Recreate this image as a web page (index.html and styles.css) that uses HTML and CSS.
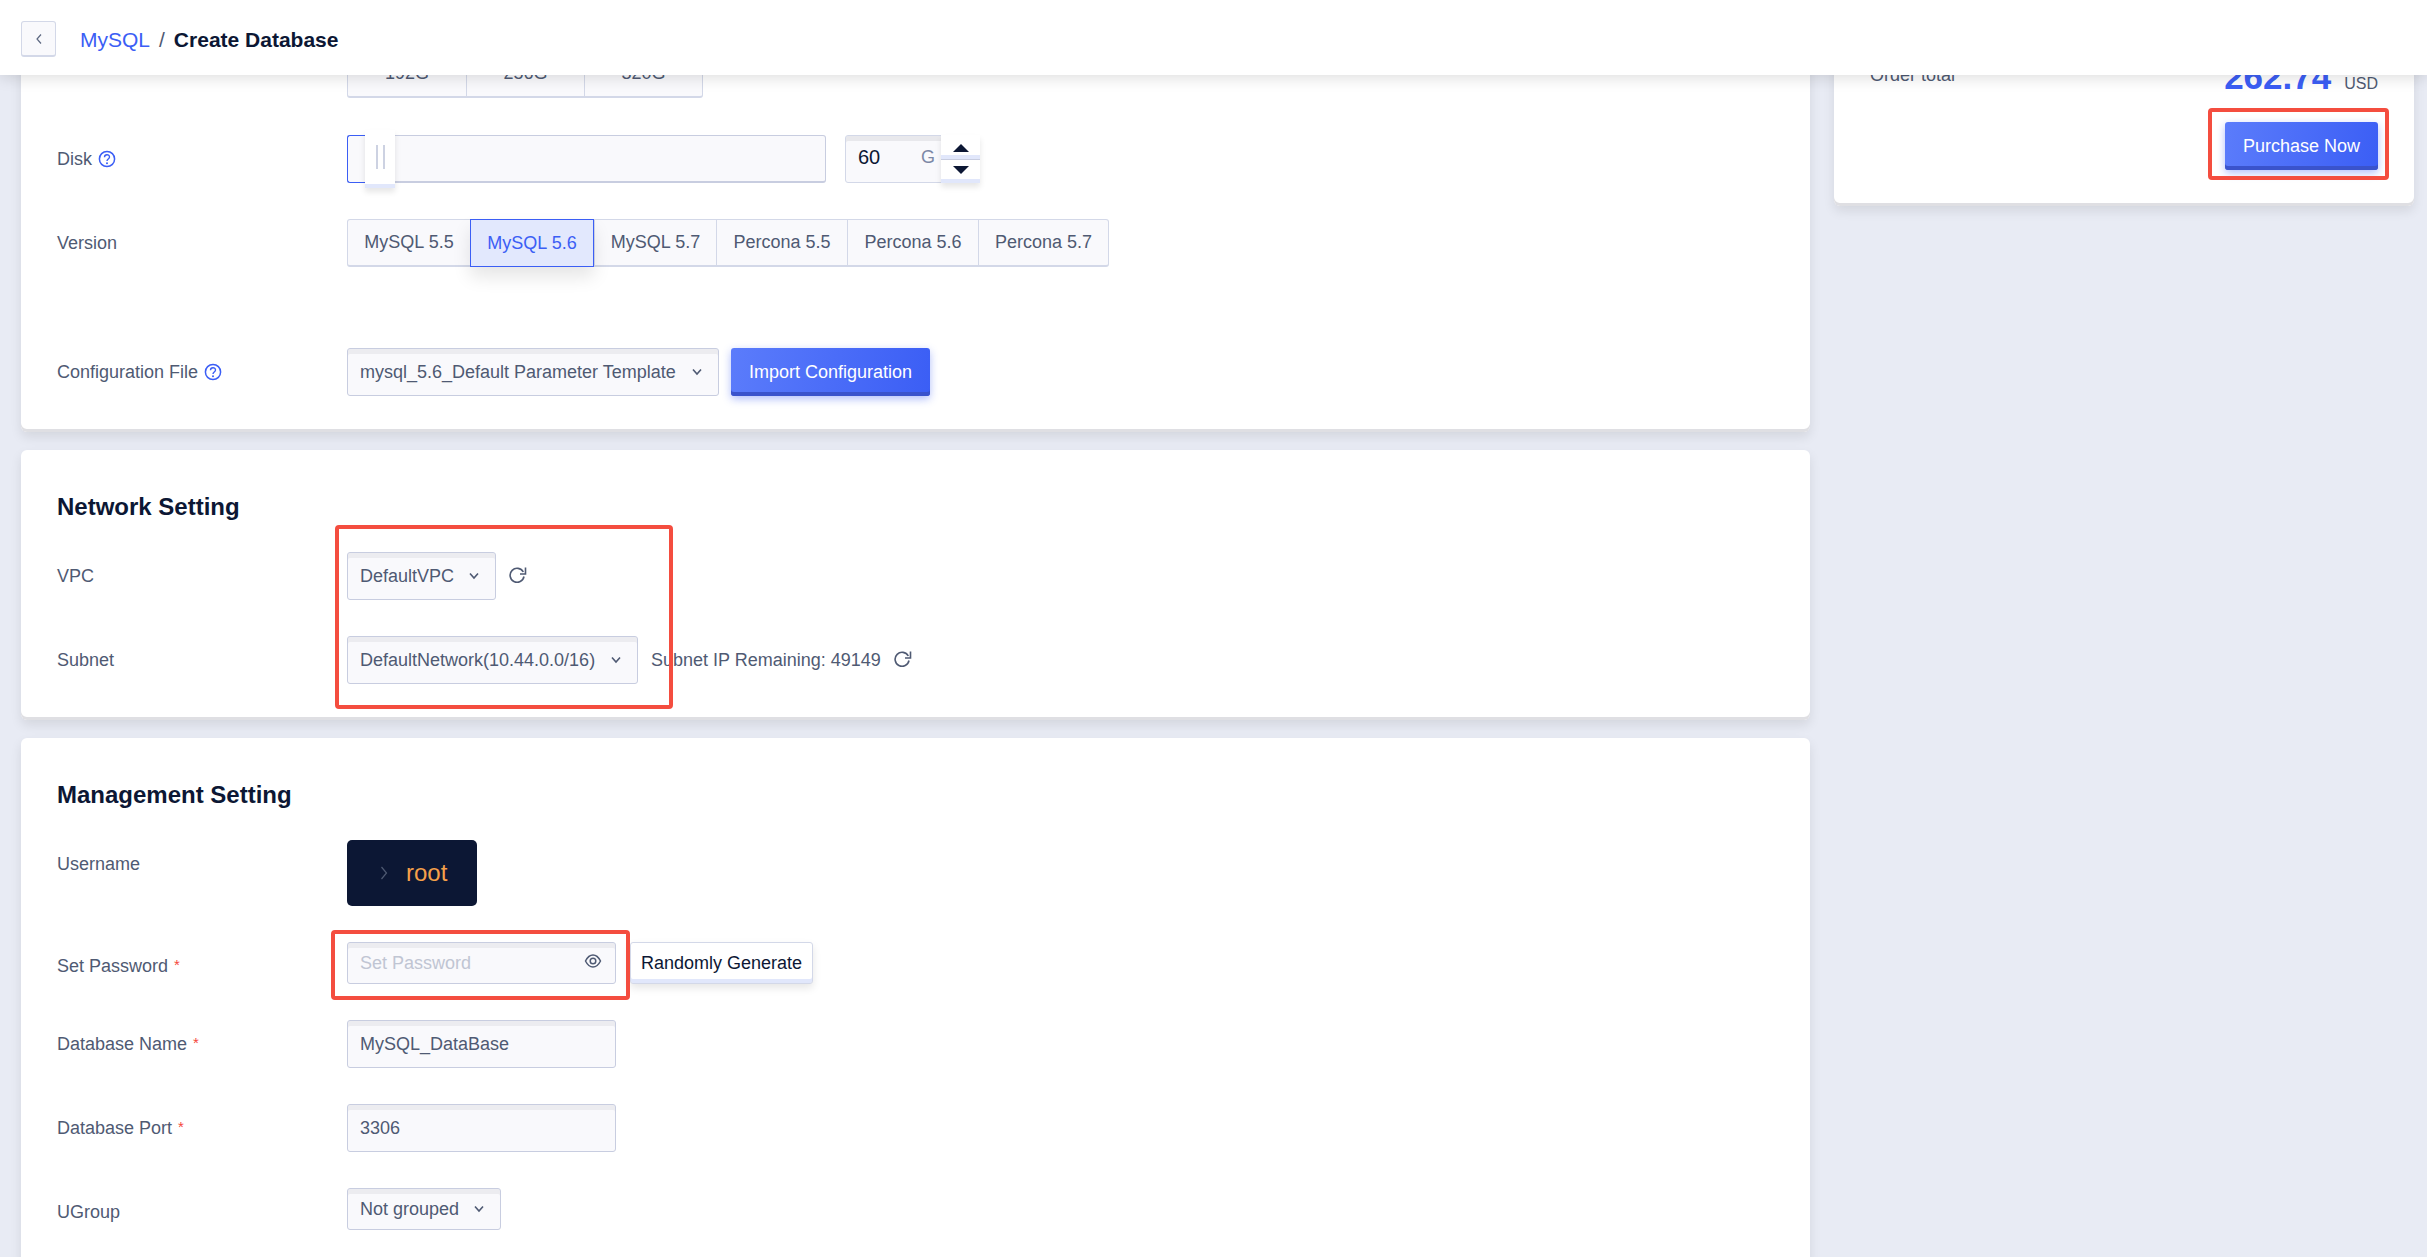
FILE: index.html
```html
<!DOCTYPE html>
<html lang="en">
<head>
    <meta charset="UTF-8">
    <title>Create Database</title>
    <link rel="stylesheet" href="styles.css">
</head>
<body>
    <header class="topbar">
        <button class="back-btn" type="button">
            <svg width="10" height="14" viewBox="0 0 10 14"><path d="M7 2.500 3 7l4 4.500" fill="none" stroke="#5c6780" stroke-width="1.2"/></svg>
        </button>
        <a class="crumb crumb-link">MySQL</a>
        <span class="crumb crumb-sep">/</span>
        <strong class="crumb crumb-current">Create Database</strong>
    </header>

    <main class="viewport">
        <div class="columns">
            <div class="form-col">
                <section class="card">
                    <div class="row">
                        <div class="label"></div>
                        <div class="seg-group memory-seg">
                            <span class="seg">192G</span>
                            <span class="seg">256G</span>
                            <span class="seg">320G</span>
                        </div>
                    </div>
                    <div class="row row-disk">
                        <div class="label">Disk
                            <svg class="help" width="18" height="18" viewBox="0 0 18 18"><circle cx="9" cy="9" r="7.600" fill="none" stroke="#3b5ef5" stroke-width="1.500"/><path d="M6.500 7.200c0-3.300 5-3.300 5-.2 0 2-2.500 2-2.500 4" fill="none" stroke="#3b5ef5" stroke-width="1.400"/><circle cx="9" cy="13.200" r="1" fill="#3b5ef5"/></svg>
                        </div>
                        <div class="slider">
                            <span class="slider-fill"></span>
                            <span class="slider-handle"><i></i><i></i></span>
                        </div>
                        <div class="stepper">
                            <span class="stepper-value">60</span>
                            <span class="stepper-unit">G</span>
                            <span class="stepper-btns">
                                <span class="step step-up"><svg width="16" height="8" viewBox="0 0 16 8"><path d="M8 0 16 8H0z" fill="#0c1734"/></svg></span>
                                <span class="step step-down"><svg width="16" height="8" viewBox="0 0 16 8"><path d="M8 8 16 0H0z" fill="#0c1734"/></svg></span>
                            </span>
                        </div>
                    </div>
                    <div class="row row-version">
                        <div class="label">Version</div>
                        <div class="seg-group version-seg">
                            <span class="seg">MySQL 5.5</span>
                            <span class="seg seg-active">MySQL 5.6</span>
                            <span class="seg">MySQL 5.7</span>
                            <span class="seg">Percona 5.5</span>
                            <span class="seg">Percona 5.6</span>
                            <span class="seg">Percona 5.7</span>
                        </div>
                    </div>
                    <div class="row">
                        <div class="label">Configuration File
                            <svg class="help" width="18" height="18" viewBox="0 0 18 18"><circle cx="9" cy="9" r="7.600" fill="none" stroke="#3b5ef5" stroke-width="1.500"/><path d="M6.500 7.200c0-3.300 5-3.300 5-.2 0 2-2.500 2-2.500 4" fill="none" stroke="#3b5ef5" stroke-width="1.400"/><circle cx="9" cy="13.200" r="1" fill="#3b5ef5"/></svg>
                        </div>
                        <div class="select select-config">mysql_5.6_Default Parameter Template
                            <svg class="caret" width="12" height="8" viewBox="0 0 12 8"><path d="M2 1.500 6 6l4-4.500" fill="none" stroke="#4f5a73" stroke-width="1.600"/></svg>
                        </div>
                        <button class="btn-primary btn-import" type="button">Import Configuration</button>
                    </div>
                </section>

                <section class="card">
                    <h3 class="card-title">Network Setting</h3>
                    <div class="row">
                        <div class="label">VPC</div>
                        <div class="select select-vpc">DefaultVPC
                            <svg class="caret" width="12" height="8" viewBox="0 0 12 8"><path d="M2 1.500 6 6l4-4.500" fill="none" stroke="#4f5a73" stroke-width="1.600"/></svg>
                        </div>
                        <svg class="refresh" width="18" height="18" viewBox="0 0 18 18"><path d="M14.300 6A7 7 0 1 0 15 10.500" fill="none" stroke="#4f5a73" stroke-width="1.600"/><path d="M16.500 1.500V8H11" fill="none" stroke="#4f5a73" stroke-width="1.600"/></svg>
                    </div>
                    <div class="row">
                        <div class="label">Subnet</div>
                        <div class="select select-subnet">DefaultNetwork(10.44.0.0/16)
                            <svg class="caret" width="12" height="8" viewBox="0 0 12 8"><path d="M2 1.500 6 6l4-4.500" fill="none" stroke="#4f5a73" stroke-width="1.600"/></svg>
                        </div>
                        <span class="note">Subnet IP Remaining: 49149</span>
                        <svg class="refresh" width="18" height="18" viewBox="0 0 18 18"><path d="M14.300 6A7 7 0 1 0 15 10.500" fill="none" stroke="#4f5a73" stroke-width="1.600"/><path d="M16.500 1.500V8H11" fill="none" stroke="#4f5a73" stroke-width="1.600"/></svg>
                    </div>
                </section>

                <section class="card">
                    <h3 class="card-title">Management Setting</h3>
                    <div class="row">
                        <div class="label">Username</div>
                        <div class="terminal">
                            <svg width="10" height="16" viewBox="0 0 10 16"><path d="M2.500 2 7.500 8l-5 6" fill="none" stroke="#4f5a73" stroke-width="1.200"/></svg>
                            <span class="terminal-text">root</span>
                        </div>
                    </div>
                    <div class="row row-compact">
                        <div class="label">Set Password <span class="req">*</span></div>
                        <div class="input input-short">
                            <input type="text" placeholder="Set Password">
                            <svg class="eye" width="18" height="14" viewBox="0 0 18 14"><path d="M1.500 7C3.500 3 6 1 9 1s5.500 2 7.500 6c-2 4-4.500 6-7.500 6s-5.500-2-7.500-6z" fill="none" stroke="#4f5a73" stroke-width="1.500"/><circle cx="9" cy="7" r="2.800" fill="none" stroke="#4f5a73" stroke-width="1.500"/></svg>
                        </div>
                        <button class="btn-plain" type="button">Randomly Generate</button>
                    </div>
                    <div class="row">
                        <div class="label">Database Name <span class="req">*</span></div>
                        <div class="input"><input type="text" value="MySQL_DataBase"></div>
                    </div>
                    <div class="row">
                        <div class="label">Database Port <span class="req">*</span></div>
                        <div class="input"><input type="text" value="3306"></div>
                    </div>
                    <div class="row row-compact">
                        <div class="label">UGroup</div>
                        <div class="select select-group">Not grouped
                            <svg class="caret" width="12" height="8" viewBox="0 0 12 8"><path d="M2 1.500 6 6l4-4.500" fill="none" stroke="#4f5a73" stroke-width="1.600"/></svg>
                        </div>
                    </div>
                </section>
            </div>

            <aside class="order-col">
                <section class="card order-card">
                    <div class="order-total">
                        <span class="order-label">Order total</span>
                        <span class="order-price">262.74</span>
                        <span class="order-unit">USD</span>
                    </div>
                    <div class="order-action">
                        <button class="btn-primary btn-buy" type="button">Purchase Now</button>
                    </div>
                </section>
            </aside>
        </div>
    </main>

    <!-- red annotation boxes drawn over the page -->
    <div class="mark mark-buy"></div>
    <div class="mark mark-network"></div>
    <div class="mark mark-password"></div>
</body>
</html>
```

FILE: styles.css
```css
* {
    box-sizing: border-box;
}

html, body {
    height: 100%;
}

body {
    margin: 0;
    position: relative;
    display: flex;
    flex-direction: column;
    overflow: hidden;
    background-color: #e8ebf4;
    color: #4f5a73;
    font-family: "Liberation Sans", Arial, sans-serif;
    font-size: 18px;
}

button {
    font-family: inherit;
    font-size: inherit;
}

/* top bar */
.topbar {
    position: relative;
    z-index: 2;
    flex: none;
    height: 75px;
    display: flex;
    align-items: center;
    padding: 3px 0 0 21px;
    background-color: #fff;
    box-shadow: 0 3px 14px rgba(0, 0, 0, 0.13);
    font-size: 21px;
}

.back-btn {
    width: 35px;
    height: 36px;
    margin-right: 24px;
    padding: 0;
    display: flex;
    align-items: center;
    justify-content: center;
    background-color: #f9f9fc;
    border: 1px solid #d3d8e8;
    border-bottom-width: 2px;
    border-radius: 3px;
}

.crumb {
    margin-top: 2px;
}

.crumb-link {
    color: #3b5ef5;
}

.crumb-sep {
    margin-left: 9px;
    margin-right: 9px;
    color: #4f5a73;
}

.crumb-current {
    color: #0c1734;
}

/* page body */
.viewport {
    flex: 1;
    min-height: 0;
    overflow: hidden;
    padding: 0 13px 0 21px;
}

.columns {
    display: grid;
    grid-template-columns: 1789px 580px;
    column-gap: 24px;
    align-items: start;
    margin-top: -61px;
}

.card {
    margin-bottom: 18px;
    padding: 36px 36px;
    background-color: #fff;
    border-radius: 6px;
    box-shadow: inset 0 -3px 0 #dfdfe3, 0 5px 12px rgba(0, 0, 0, 0.09);
}

.card-title {
    height: 42px;
    margin: 0 0 24px;
    color: #0c1734;
    font-size: 24px;
    font-weight: bold;
    line-height: 42px;
}

.row {
    display: flex;
    align-items: flex-start;
    margin-bottom: 36px;
}

.row:last-child {
    margin-bottom: 0;
}

.row-disk {
    margin-top: 37px;
}

.row-version {
    margin-bottom: 81px;
}

.row-compact {
    height: 42px;
}

.label {
    flex: none;
    width: 290px;
    height: 48px;
    line-height: 48px;
    display: flex;
    align-items: center;
    gap: 6px;
}

.req {
    color: #f5473b;
    font-size: 15px;
    line-height: 46px;
    align-self: flex-start;
}

/* segmented buttons */
.seg-group {
    display: flex;
    height: 48px;
    background-color: #f9f9fc;
    border: 1px solid #d3d8e8;
    border-bottom-width: 2px;
    border-radius: 3px;
}

.seg {
    display: flex;
    align-items: center;
    justify-content: center;
    border-left: 1px solid #d3d8e8;
    white-space: nowrap;
}

.seg:first-child {
    border-left: 0;
}

.memory-seg .seg {
    width: 118px;
}

.version-seg .seg:nth-child(1),
.version-seg .seg:nth-child(3) {
    width: 122px;
}

.version-seg .seg:nth-child(2) {
    width: 124px;
}

.version-seg .seg:nth-child(4),
.version-seg .seg:nth-child(5) {
    width: 131px;
}

.version-seg .seg:nth-child(6) {
    width: 130px;
}

.seg-active {
    position: relative;
    margin: -1px 0 -2px;
    background-color: #e2e8fd;
    border: 1px solid #3b5ef5;
    color: #3b5ef5;
    box-shadow: 0 10px 18px rgba(0, 0, 0, 0.1);
}

/* disk slider */
.slider {
    position: relative;
    width: 479px;
    height: 48px;
    margin-right: 19px;
    background-color: #f9f9fc;
    border: 1px solid #c8cde0;
    border-bottom-width: 2px;
    border-radius: 3px;
}

.slider-fill {
    position: absolute;
    left: -1px;
    top: -1px;
    bottom: -2px;
    width: 22px;
    background-color: #f9f9fc;
    border: 1px solid #3b5ef5;
    border-right: 0;
    border-radius: 3px 0 0 3px;
}

.slider-handle {
    position: absolute;
    left: 17px;
    top: -6px;
    width: 30px;
    height: 58px;
    display: flex;
    align-items: center;
    justify-content: center;
    gap: 5px;
    background-color: #fff;
    border-bottom: 4px solid #e1e7fb;
    box-shadow: 0 4px 6px rgba(0, 0, 0, 0.1);
}

.slider-handle i {
    width: 2px;
    height: 24px;
    background-color: #cdd2e2;
}

.stepper {
    position: relative;
    width: 135px;
    height: 48px;
    padding: 0 0 3px 12px;
    display: flex;
    align-items: center;
    background-color: #f9f9fc;
    border: 1px solid #d3d8e8;
    border-radius: 3px;
    box-shadow: inset 0 5px 0 #e8e8ec;
    color: #0c1734;
}

.stepper-value {
    width: 63px;
    font-size: 20px;
}

.stepper-unit {
    color: #7c88a6;
}

.stepper-btns {
    position: absolute;
    top: -1px;
    right: -1px;
    width: 39px;
    height: 48px;
    display: flex;
    flex-direction: column;
    background-color: #fff;
    box-shadow: 0 4px 6px rgba(0, 0, 0, 0.1);
}

.step {
    display: flex;
    align-items: center;
    justify-content: center;
}

.step-up {
    height: 25px;
    padding-top: 2px;
    border-bottom: 1px solid #c8cde0;
    box-shadow: inset 0 -4px 0 #e1e7fb;
}

.step-down {
    height: 23px;
    border-bottom: 4px solid #e1e7fb;
}

/* selects and inputs */
.select {
    position: relative;
    height: 48px;
    display: flex;
    align-items: center;
    justify-content: space-between;
    padding: 0 15px 0 12px;
    background-color: #f9f9fc;
    border: 1px solid #c8cde0;
    border-radius: 3px;
    box-shadow: inset 0 5px 0 #ececf0;
    white-space: nowrap;
}

.select-config {
    width: 372px;
}

.select-vpc {
    width: 149px;
}

.select-subnet {
    width: 291px;
}

.select-group {
    width: 154px;
    height: 42px;
}

.caret {
    flex: none;
}

.refresh {
    margin: 14px 0 0 13px;
}

.note {
    margin-left: 13px;
    line-height: 48px;
}

.input {
    position: relative;
    width: 269px;
    height: 48px;
    display: flex;
    align-items: center;
    background-color: #f9f9fc;
    border: 1px solid #c8cde0;
    border-radius: 3px;
    box-shadow: inset 0 5px 0 #ececf0;
}

.input input {
    width: 100%;
    height: 100%;
    padding: 0 12px;
    background: transparent;
    border: 0;
    outline: none;
    color: #4f5a73;
    font-family: inherit;
    font-size: inherit;
}

.input input::placeholder {
    color: #c0c5d3;
}

.input-short {
    height: 42px;
}

.eye {
    position: absolute;
    right: 13px;
    top: 11px;
}

.terminal {
    width: 130px;
    height: 66px;
    display: flex;
    align-items: center;
    padding-left: 32px;
    gap: 17px;
    background-color: #0c1734;
    border-radius: 5px;
}

.terminal-text {
    color: #f5a04a;
    font-size: 24px;
}

.btn-primary {
    height: 48px;
    padding: 0;
    background: linear-gradient(100deg, #5b7cfb, #3b5ef5);
    border: 0;
    border-radius: 3px;
    box-shadow: inset 0 -4px 0 #3a53cc, 0 3px 8px rgba(59, 94, 245, 0.4);
    color: #fff;
}

.btn-import {
    width: 199px;
    margin-left: 12px;
}

.btn-plain {
    width: 183px;
    height: 42px;
    margin-left: 14px;
    padding: 0;
    background-color: #fff;
    border: 1px solid #d3d8e8;
    border-radius: 3px;
    box-shadow: inset 0 -4px 0 #e1e7fb, 0 4px 8px rgba(0, 0, 0, 0.1);
    color: #0c1734;
}

/* order summary */
.order-card {
    height: 192px;
    padding: 36px 36px 35px;
}

.order-total {
    height: 47px;
    padding-top: 7px;
    display: flex;
    align-items: baseline;
    margin-bottom: 25px;
}

.order-label {
    margin-right: auto;
    align-self: flex-start;
    line-height: 36px;
}

.order-price {
    color: #3b5ef5;
    font-size: 35px;
    font-weight: bold;
    line-height: 40px;
}

.order-unit {
    margin-left: 13px;
    font-size: 16px;
}

.order-action {
    display: flex;
    justify-content: flex-end;
}

.btn-buy {
    width: 153px;
}

/* annotation boxes */
.mark {
    position: absolute;
    z-index: 3;
    border: 4px solid #f44d3f;
    border-radius: 4px;
    pointer-events: none;
}

.mark-buy {
    left: 2208px;
    top: 108px;
    width: 181px;
    height: 72px;
}

.mark-network {
    left: 335px;
    top: 525px;
    width: 338px;
    height: 184px;
}

.mark-password {
    left: 331px;
    top: 930px;
    width: 299px;
    height: 70px;
}
```
